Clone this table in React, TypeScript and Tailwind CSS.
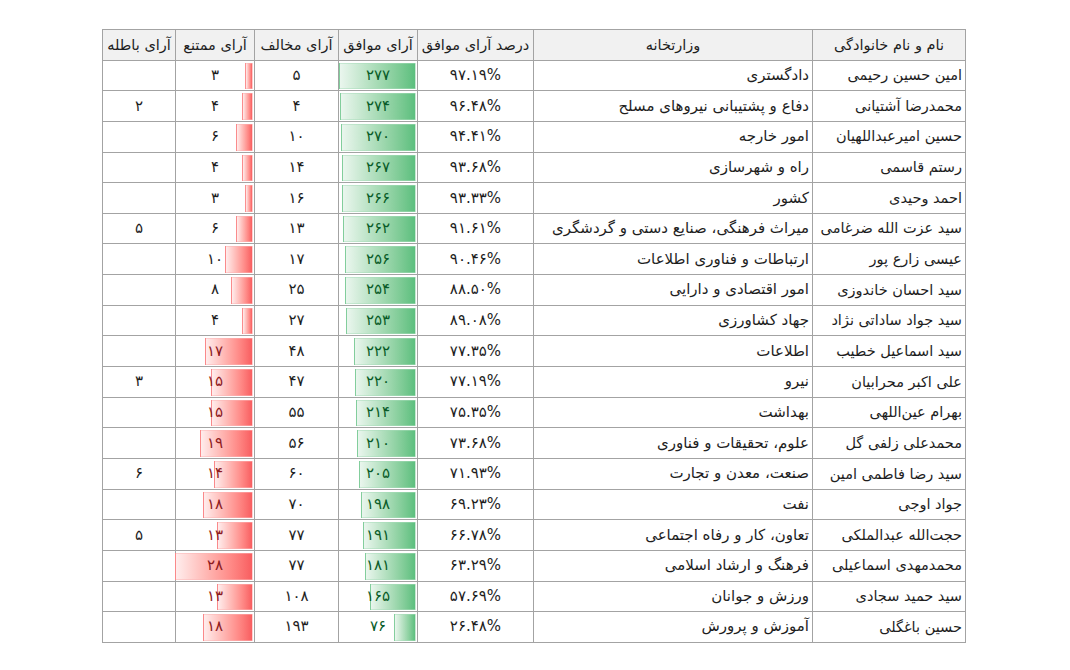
import React from "react";

type Row = {
  name: string;
  ministry: string;
  percent: string;
  yes: number;
  no: number;
  abstain: number;
  invalid?: number;
};

const rows: Row[] = [
  { name: "امین حسین رحیمی", ministry: "دادگستری", percent: "97.19", yes: 277, no: 5, abstain: 3 },
  { name: "محمدرضا آشتیانی", ministry: "دفاع و پشتیبانی نیروهای مسلح", percent: "96.48", yes: 274, no: 4, abstain: 4, invalid: 2 },
  { name: "حسین امیرعبداللهیان", ministry: "امور خارجه", percent: "94.41", yes: 270, no: 10, abstain: 6 },
  { name: "رستم قاسمی", ministry: "راه و شهرسازی", percent: "93.68", yes: 267, no: 14, abstain: 4 },
  { name: "احمد وحیدی", ministry: "کشور", percent: "93.33", yes: 266, no: 16, abstain: 3 },
  { name: "سید عزت الله ضرغامی", ministry: "میراث فرهنگی، صنایع دستی و گردشگری", percent: "91.61", yes: 262, no: 13, abstain: 6, invalid: 5 },
  { name: "عیسی زارع پور", ministry: "ارتباطات و فناوری اطلاعات", percent: "90.46", yes: 256, no: 17, abstain: 10 },
  { name: "سید احسان خاندوزی", ministry: "امور اقتصادی و دارایی", percent: "88.50", yes: 254, no: 25, abstain: 8 },
  { name: "سید جواد ساداتی نژاد", ministry: "جهاد کشاورزی", percent: "89.08", yes: 253, no: 27, abstain: 4 },
  { name: "سید اسماعیل خطیب", ministry: "اطلاعات", percent: "77.35", yes: 222, no: 48, abstain: 17 },
  { name: "علی اکبر محرابیان", ministry: "نیرو", percent: "77.19", yes: 220, no: 47, abstain: 15, invalid: 3 },
  { name: "بهرام عین‌اللهی", ministry: "بهداشت", percent: "75.35", yes: 214, no: 55, abstain: 15 },
  { name: "محمدعلی زلفی گل", ministry: "علوم، تحقیقات و فناوری", percent: "73.68", yes: 210, no: 56, abstain: 19 },
  { name: "سید رضا فاطمی امین", ministry: "صنعت، معدن و تجارت", percent: "71.93", yes: 205, no: 60, abstain: 14, invalid: 6 },
  { name: "جواد اوجی", ministry: "نفت", percent: "69.23", yes: 198, no: 70, abstain: 18 },
  { name: "حجت‌الله عبدالملکی", ministry: "تعاون، کار و رفاه اجتماعی", percent: "66.78", yes: 191, no: 77, abstain: 13, invalid: 5 },
  { name: "محمدمهدی اسماعیلی", ministry: "فرهنگ و ارشاد اسلامی", percent: "63.29", yes: 181, no: 77, abstain: 28 },
  { name: "سید حمید سجادی", ministry: "ورزش و جوانان", percent: "57.69", yes: 165, no: 108, abstain: 13 },
  { name: "حسین باغگلی", ministry: "آموزش و پرورش", percent: "26.48", yes: 76, no: 193, abstain: 18 },
];

const fa = (v: string | number) =>
  String(v).replace(/[0-9]/g, (d) => "۰۱۲۳۴۵۶۷۸۹"[Number(d)]);

const headers = [
  { label: "نام و نام خانوادگی", w: "w-[153px]" },
  { label: "وزارتخانه", w: "w-[279px]" },
  { label: "درصد آرای موافق", w: "w-[116px]" },
  { label: "آرای موافق", w: "w-[79px]" },
  { label: "آرای مخالف", w: "w-[84px]" },
  { label: "آرای ممتنع", w: "w-[79px]" },
  { label: "آرای باطله", w: "w-[73px]" },
];

const cell = "h-[30.65px] p-0 border border-[#a3a3a3] align-middle leading-none";

export default function App() {
  return (
    <div className="min-h-screen bg-white pt-[29px] pl-[102px] font-['DejaVu_Sans',sans-serif] text-[15px] text-[#1e1e1e]">
      <table dir="rtl" className="w-[863px] table-fixed border-collapse">
        <thead>
          <tr className="bg-[#f1f1f1]">
            {headers.map((h) => (
              <th key={h.label} className={`${cell} ${h.w} text-center text-[14.5px] font-normal whitespace-nowrap`}>
                {h.label}
              </th>
            ))}
          </tr>
        </thead>
        <tbody>
          {rows.map((r) => (
            <tr key={r.name}>
              <td className={`${cell} pr-[3px] text-right text-[14.5px] whitespace-nowrap`}>{r.name}</td>
              <td className={`${cell} pr-[3px] text-right whitespace-nowrap`}>{r.ministry}</td>
              <td className={`${cell} text-center`}>{fa(r.percent)}%</td>
              <td className={`${cell} relative text-center`}>
                <div
                  className="absolute right-[1px] top-[2px] bottom-[1px] bg-linear-to-l from-[#5cbf7e] to-[#eaf6ee] border border-[#a8dcb9]/50"
                  style={{ width: 1 + r.yes * 0.274 + "px" }}
                />
                <span className="relative text-[#0a5c28]">{fa(r.yes)}</span>
              </td>
              <td className={`${cell} text-center`}>{fa(r.no)}</td>
              <td className={`${cell} relative text-center`}>
                <div
                  className="absolute right-[1px] top-[2px] bottom-[1px] bg-linear-to-l from-[#f85d60] to-[#ffeded] border border-[#fbb3b4]/50"
                  style={{ width: r.abstain * 2.8 + "px" }}
                />
                <span className={`relative ${r.abstain > 10 ? "text-[#8e1b1e]" : "text-[#1e1e1e]"}`}>
                  {fa(r.abstain)}
                </span>
              </td>
              <td className={`${cell} text-center`}>{r.invalid ? fa(r.invalid) : ""}</td>
            </tr>
          ))}
        </tbody>
      </table>
    </div>
  );
}
